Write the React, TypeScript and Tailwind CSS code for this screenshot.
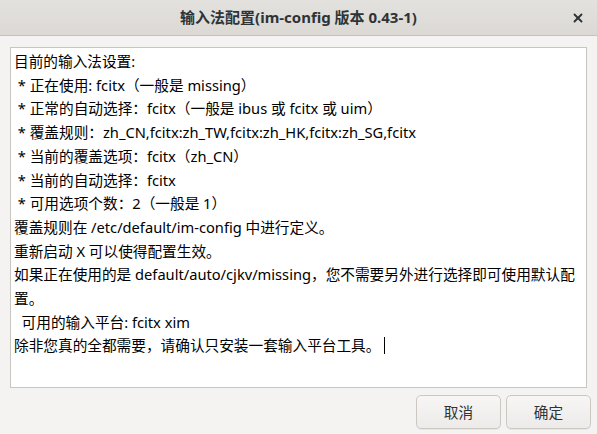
import { X } from "lucide-react";

const lines = [
  "目前的输入法设置:",
  " * 正在使用: fcitx（一般是 missing）",
  " * 正常的自动选择：fcitx（一般是 ibus 或 fcitx 或 uim）",
  " * 覆盖规则：zh_CN,fcitx:zh_TW,fcitx:zh_HK,fcitx:zh_SG,fcitx",
  " * 当前的覆盖选项：fcitx（zh_CN）",
  " * 当前的自动选择：fcitx",
  " * 可用选项个数：2（一般是 1）",
  "覆盖规则在 /etc/default/im-config 中进行定义。",
  "重新启动 X 可以使得配置生效。",
  "如果正在使用的是 default/auto/cjkv/missing，您不需要另外进行选择即可使用默认配",
  "置。",
  "  可用的输入平台: fcitx xim",
];

export default function App() {
  return (
    <div
      className="flex h-[434px] w-[597px] flex-col bg-[#f4f3f2] text-[#2e3436]"
      style={{ fontFamily: '"Noto Sans", "Noto Sans CJK SC", sans-serif' }}
    >
      {/* Title bar */}
      <div className="relative flex h-[36px] shrink-0 items-center justify-center border-b border-[#c4c0bb] bg-gradient-to-b from-[#e3e1de] to-[#dcd9d5]">
        <span className="text-[15px] font-bold text-[#2e3436]">输入法配置(im-config 版本 0.43-1)</span>
        <button className="absolute right-[10px] top-[9px] flex h-[18px] w-[18px] items-center justify-center text-[#2e3436]">
          <X size={14} strokeWidth={3.2} />
        </button>
      </div>

      {/* Text area */}
      <div className="mx-[10px] mt-[11px] h-[341px] border border-[#c9c5c0] bg-white px-[3px] pt-[2px] text-[14.67px] leading-[23.7px] text-black">
        {lines.map((l, i) => (
          <div key={i} className="whitespace-pre">
            {l}
          </div>
        ))}
        <div className="whitespace-pre">
          除非您真的全都需要，请确认只安装一套输入平台工具。
          <span className="ml-[4px] inline-block h-[17px] w-px translate-y-[3px] bg-black" />
        </div>
      </div>

      {/* Buttons */}
      <div className="flex justify-end gap-[5px] px-[6px] pt-[7px]">
        <button className="h-[34px] w-[85px] rounded-[5px] border border-[#cdc7c2] bg-gradient-to-b from-[#f7f6f5] to-[#edebe9] text-[14.67px] text-[#2e3436] shadow-[0_1px_0_rgba(0,0,0,0.05)]">
          取消
        </button>
        <button className="h-[34px] w-[85px] rounded-[5px] border border-[#cdc7c2] bg-gradient-to-b from-[#f7f6f5] to-[#edebe9] text-[14.67px] text-[#2e3436] shadow-[0_1px_0_rgba(0,0,0,0.05)]">
          确定
        </button>
      </div>
    </div>
  );
}
